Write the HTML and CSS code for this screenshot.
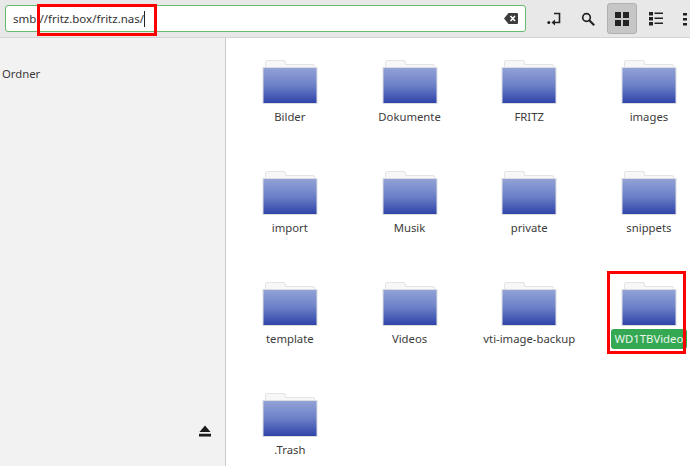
FILE: index.html
```html
<!DOCTYPE html>
<html lang="en">
<head>
    <meta charset="UTF-8">
    <title>fritz.nas</title>
    <link rel="stylesheet" href="styles.css">
</head>
<body>

<svg class="defs" width="0" height="0">
    <defs>
        <linearGradient id="folderBlue" x1="0" y1="0" x2="0" y2="1">
            <stop offset="0" stop-color="#92a2d6"/>
            <stop offset="0.5" stop-color="#6c80c8"/>
            <stop offset="1" stop-color="#2f44a8"/>
        </linearGradient>
        <symbol id="folder" viewBox="0 0 56 46">
            <path d="M3.500 10v-7q0-1.500 1.500-1.500h17q1.500 0 1.500 1.500v2.500h27.500q1.500 0 1.500 1.500v2.500z" fill="#f7f7f7" stroke="#dedede" stroke-width="0.8"/>
            <rect x="0.500" y="8" width="55" height="37" fill="#dcdde0"/>
            <rect x="1.500" y="9" width="53" height="35" fill="url(#folderBlue)"/>
        </symbol>
    </defs>
</svg>

<div class="window">
    <div class="toolbar">
        <div class="pathbar">
            <span class="pathtext">smb://fritz.box/fritz.nas/</span><span class="caret"></span>
            <svg class="clear-icon" width="14" height="11" viewBox="0 0 14 11">
                <path d="M4.500 0h8.500a1 1 0 0 1 1 1v9a1 1 0 0 1-1 1h-8.500l-4.500-5.500z" fill="#3d3d3d"/>
                <path d="M6.500 3l4.500 5m0-5l-4.500 5" stroke="#fff" stroke-width="1.600"/>
            </svg>
        </div>
        <div class="tools">
            <button class="tool">
                <svg width="14" height="14" viewBox="0 0 14 14">
                    <path d="M7 1.500h5.500v9h-5" fill="none" stroke="#222" stroke-width="1.600"/>
                    <path d="M8 7.500v6l-3.500-3z" fill="#222"/>
                    <circle cx="1.800" cy="10.500" r="1.500" fill="#222"/>
                </svg>
            </button>
            <button class="tool">
                <svg width="14" height="14" viewBox="0 0 14 14">
                    <circle cx="5.500" cy="5.500" r="3.800" fill="none" stroke="#222" stroke-width="1.700"/>
                    <path d="M8.200 8.200l5 5" stroke="#222" stroke-width="2.100"/>
                </svg>
            </button>
            <button class="tool active">
                <svg width="14" height="14" viewBox="0 0 14 14" fill="#222">
                    <rect width="6" height="6"/><rect x="8" width="6" height="6"/>
                    <rect y="8" width="6" height="6"/><rect x="8" y="8" width="6" height="6"/>
                </svg>
            </button>
            <button class="tool">
                <svg width="14" height="14" viewBox="0 0 14 14" fill="#222">
                    <rect width="4" height="3.500"/><rect y="5" width="4" height="3.500"/><rect y="10" width="4" height="3.500"/>
                    <rect x="5.500" y="0.500" width="8.500" height="1.500"/><rect x="5.500" y="5.500" width="8.500" height="1.500"/><rect x="5.500" y="10.500" width="8.500" height="1.500"/>
                </svg>
            </button>
            <button class="tool">
                <svg width="14" height="14" viewBox="0 0 14 14" fill="#222">
                    <rect x="0" y="1" width="4" height="2.500"/><rect x="0" y="6" width="4" height="2.500"/><rect x="0" y="11" width="4" height="2.500"/>
                </svg>
            </button>
        </div>
    </div>

    <div class="main">
        <div class="sidebar">
            <div class="side-title">Ordner</div>
            <svg class="eject" width="12" height="12" viewBox="0 0 13 13" fill="#1c1c1c">
                <path d="M6.500 0.500l6 7h-12z"/>
                <rect y="9.500" width="13" height="3"/>
            </svg>
        </div>
        <div class="files">
            <div class="file"><svg class="folder" width="56" height="46"><use href="#folder"/></svg><span class="name">Bilder</span></div>
            <div class="file"><svg class="folder" width="56" height="46"><use href="#folder"/></svg><span class="name">Dokumente</span></div>
            <div class="file"><svg class="folder" width="56" height="46"><use href="#folder"/></svg><span class="name">FRITZ</span></div>
            <div class="file"><svg class="folder" width="56" height="46"><use href="#folder"/></svg><span class="name">images</span></div>
            <div class="file"><svg class="folder" width="56" height="46"><use href="#folder"/></svg><span class="name">import</span></div>
            <div class="file"><svg class="folder" width="56" height="46"><use href="#folder"/></svg><span class="name">Musik</span></div>
            <div class="file"><svg class="folder" width="56" height="46"><use href="#folder"/></svg><span class="name">private</span></div>
            <div class="file"><svg class="folder" width="56" height="46"><use href="#folder"/></svg><span class="name">snippets</span></div>
            <div class="file"><svg class="folder" width="56" height="46"><use href="#folder"/></svg><span class="name">template</span></div>
            <div class="file"><svg class="folder" width="56" height="46"><use href="#folder"/></svg><span class="name">Videos</span></div>
            <div class="file"><svg class="folder" width="56" height="46"><use href="#folder"/></svg><span class="name">vti-image-backup</span></div>
            <div class="file"><svg class="folder" width="56" height="46"><use href="#folder"/></svg><span class="name selected">WD1TBVideo</span></div>
            <div class="file"><svg class="folder" width="56" height="46"><use href="#folder"/></svg><span class="name">.Trash</span></div>
        </div>
    </div>

    <div class="mark mark-path"></div>
    <div class="mark mark-folder"></div>
</div>

</body>
</html>
```

FILE: styles.css
```css
html, body {
    margin: 0;
    height: 100%;
    overflow: hidden;
}
body {
    font-family: "Noto Sans", sans-serif;
    font-size: 11.300px;
    color: #3c3c3c;
    background-color: #fff;
}
.defs {
    position: absolute;
}
.window {
    position: relative;
    width: 690px;
    height: 466px;
    overflow: hidden;
}
.toolbar {
    display: flex;
    align-items: center;
    height: 38px;
    padding-left: 5px;
    box-sizing: border-box;
    background-color: #e8e8e8;
    border-bottom: 1px solid #d4d4d4;
}
.pathbar {
    display: flex;
    flex: none;
    align-items: center;
    width: 521px;
    height: 27px;
    padding: 0 7px 0 7px;
    box-sizing: border-box;
    background-color: #fff;
    border: 1px solid #66b96f;
    border-radius: 3px;
}
.pathtext {
    font-size: 11.500px;
    color: #333;
}
.caret {
    width: 1px;
    height: 16px;
    background-color: #222;
}
.clear-icon {
    margin-left: auto;
}
.tools {
    display: flex;
    flex: none;
    gap: 4px;
    margin-left: 13px;
}
.tool {
    display: flex;
    flex: none;
    align-items: center;
    justify-content: center;
    width: 30px;
    height: 31px;
    padding: 0;
    background: none;
    border: 1px solid transparent;
    border-radius: 3px;
}
.tool.active {
    background-color: #c6c6c6;
    border-color: #b0b0b0;
}
.main {
    display: flex;
    height: 428px;
}
.sidebar {
    position: relative;
    flex: none;
    width: 225px;
    background-color: #f2f2f2;
    border-right: 1px solid #c9c9c9;
}
.side-title {
    padding: 27px 0 0 2px;
    line-height: 17px;
}
.eject {
    position: absolute;
    left: 199px;
    top: 387px;
}
.files {
    display: grid;
    grid-template-columns: repeat(4, 119.700px);
    grid-auto-rows: 111px;
    padding: 21px 0 0 4px;
}
.file {
    display: flex;
    flex-direction: column;
    align-items: center;
}
.folder {
    flex: none;
}
.name {
    margin-top: 2px;
    padding: 2px 4px;
    line-height: 16px;
    white-space: nowrap;
}
.name.selected {
    color: #eaf7ec;
    background-color: #35a853;
    border-radius: 3px;
}
.mark {
    position: absolute;
    border: 3px solid #f00;
    box-sizing: border-box;
}
.mark-path {
    left: 37px;
    top: 4px;
    width: 120px;
    height: 32px;
}
.mark-folder {
    left: 607px;
    top: 271px;
    width: 79px;
    height: 83px;
}
```
